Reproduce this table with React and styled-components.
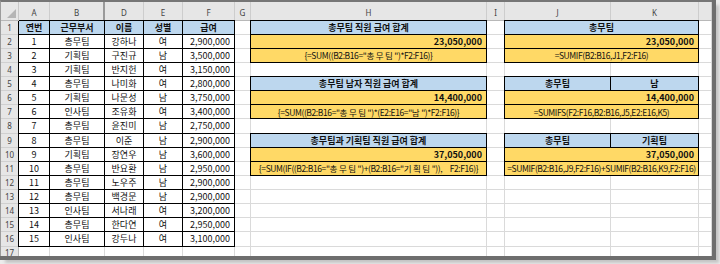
import React from "react";
import styled, { createGlobalStyle, css } from "styled-components";

const Global = createGlobalStyle`
  html, body { margin: 0; padding: 0; background: #ececec; }
  body { width: 720px; height: 264px; overflow: hidden; }
`;

const Frame = styled.div`
  width: 711px;
  height: 254px;
  background: #fff;
  border-top: 2px solid #767676;
  border-left: 1px solid #9c9c9c;
  box-shadow: 2px 2px 0 2px #6e6e6e, 6px 6px 3px 1px #c4c4c4;
  overflow: hidden;
`;

const Sheet = styled.div`
  display: grid;
  grid-template-columns: 18px 31px 55px 39px 39px 52px 16px 236px 18px 106px 88px 13px;
  grid-template-rows: 18.5px repeat(16, 14.125px) 12px;
  font-family: "Noto Sans CJK KR", "Noto Sans", sans-serif;
  font-size: 9px;
  color: #111;
`;

const Corner = styled.div`
  background: #e6e6e6;
  border-right: 1px solid #c8c8c8;
  border-bottom: 1px solid #b8b8b8;
  position: relative;
  &::after {
    content: "";
    position: absolute;
    right: 2px;
    bottom: 2px;
    width: 0;
    height: 0;
    border-left: 9px solid transparent;
    border-bottom: 9px solid #b5b5b5;
  }
`;

const ColHead = styled.div`
  background: #e6e6e6;
  border-right: ${(p) => (p.$double ? "2px double #9a9a9a" : "1px solid #cdcdcd")};
  border-bottom: 1px solid #b8b8b8;
  display: flex;
  align-items: center;
  justify-content: center;
  font-family: "Noto Sans", sans-serif;
  font-size: 8px;
  color: #444;
  padding-top: 3px;
`;

const RowHead = styled.div`
  background: #e6e6e6;
  border-right: 1px solid #b8b8b8;
  border-bottom: 1px solid #d0d0d0;
  display: flex;
  align-items: center;
  justify-content: center;
  font-family: "Noto Sans", sans-serif;
  font-size: 8px;
  color: #444;
  overflow: hidden;
`;

const fills = { blue: "#bdd7ee", yellow: "#ffd966" };

const Cell = styled.div`
  grid-column: span ${(p) => p.$span || 1};
  background: ${(p) => (p.$fill ? fills[p.$fill] : "#fff")};
  border-right: 1px solid #dadada;
  border-bottom: 1px solid #dadada;
  display: flex;
  align-items: center;
  justify-content: ${(p) => (p.$align === "right" ? "flex-end" : "center")};
  padding: 0 ${(p) => (p.$align === "right" ? "4px" : "1px")} 0 1px;
  font-weight: ${(p) => (p.$bold ? 700 : 400)};
  white-space: nowrap;
  overflow: hidden;
  ${(p) =>
    p.$formula &&
    css`
      font-size: 8.5px;
      letter-spacing: -0.4px;
      word-spacing: 1px;
    `}
  ${(p) =>
    p.$boxed &&
    css`
      border-right-color: #000;
      border-bottom-color: #000;
      box-shadow: -1px 0 0 #000, 0 -1px 0 #000, -1px -1px 0 #000;
    `}
`;

const Quoted = styled.span`
  letter-spacing: 1.5px;
`;

const people = [
  [1, "총무팀", "강하나", "여", "2,900,000"],
  [2, "기획팀", "구진규", "남", "3,500,000"],
  [3, "기획팀", "반지헌", "여", "3,150,000"],
  [4, "총무팀", "나미화", "여", "2,800,000"],
  [5, "기획팀", "나문성", "남", "3,750,000"],
  [6, "인사팀", "조유화", "여", "3,400,000"],
  [7, "총무팀", "윤진미", "남", "2,750,000"],
  [8, "총무팀", "이준", "남", "2,900,000"],
  [9, "기획팀", "장연우", "남", "3,600,000"],
  [10, "총무팀", "반요환", "남", "2,950,000"],
  [11, "총무팀", "노우주", "남", "2,900,000"],
  [12, "총무팀", "백경문", "남", "2,900,000"],
  [13, "인사팀", "서나래", "여", "3,200,000"],
  [14, "총무팀", "한다연", "여", "2,950,000"],
  [15, "인사팀", "강두나", "여", "3,100,000"],
];

const title = (t) => ({ text: t, fill: "blue", bold: true, boxed: true });
const value = (t) => ({ text: t, fill: "yellow", bold: true, align: "right", boxed: true });
const formula = (t) => ({ text: t, fill: "yellow", boxed: true, formula: true });
const empty = {};

const Q = ({ children }) => <Quoted>{children}</Quoted>;

// right side: H, I, J, K, L
const rightRows = {
  1: [title("총무팀 직원 급여 합계"), empty, { ...title("총무팀"), span: 2 }, empty],
  2: [value("23,050,000"), empty, { ...value("23,050,000"), span: 2 }, empty],
  3: [
    formula(<>{'{=SUM((B2:B16="'}<Q>총무팀</Q>{'")*F2:F16)}'}</>),
    empty,
    { ...formula("=SUMIF(B2:B16,J1,F2:F16)"), span: 2 },
    empty,
  ],
  5: [title("총무팀 남자 직원 급여 합계"), empty, title("총무팀"), title("남"), empty],
  6: [value("14,400,000"), empty, { ...value("14,400,000"), span: 2 }, empty],
  7: [
    formula(<>{'{=SUM((B2:B16="'}<Q>총무팀</Q>{'")*(E2:E16="'}<Q>남</Q>{'")*F2:F16)}'}</>),
    empty,
    { ...formula("=SUMIFS(F2:F16,B2:B16,J5,E2:E16,K5)"), span: 2 },
    empty,
  ],
  9: [title("총무팀과 기획팀 직원 급여 합계"), empty, title("총무팀"), title("기획팀"), empty],
  10: [value("37,050,000"), empty, { ...value("37,050,000"), span: 2 }, empty],
  11: [
    formula(
      <>
        {'{=SUM(IF((B2:B16="'}
        <Q>총무팀</Q>
        {'")+(B2:B16="'}
        <Q>기획팀</Q>
        {'")),\u00a0\u00a0\u00a0F2:F16)}'}
      </>
    ),
    empty,
    { ...formula("=SUMIF(B2:B16,J9,F2:F16)+SUMIF(B2:B16,K9,F2:F16)"), span: 2 },
    empty,
  ],
};

const blankRight = [empty, empty, empty, empty, empty];

function leftCells(r) {
  if (r === 1) {
    return ["연번", "근무부서", "이름", "성별", "급여"].map((t) => ({ text: t, fill: "blue", bold: true, boxed: true }));
  }
  if (r >= 2 && r <= 16) {
    const p = people[r - 2];
    return [
      { text: p[0], boxed: true },
      { text: p[1], boxed: true },
      { text: p[2], boxed: true },
      { text: p[3], boxed: true },
      { text: p[4], boxed: true, align: "right" },
    ];
  }
  return [empty, empty, empty, empty, empty];
}

const columns = ["A", "B", "D", "E", "F", "G", "H", "I", "J", "K", ""];

export default function App() {
  const rows = [];
  for (let r = 1; r <= 17; r++) {
    const cells = [...leftCells(r), empty, ...(rightRows[r] || blankRight)];
    rows.push(
      <React.Fragment key={r}>
        <RowHead>{r}</RowHead>
        {cells.map((c, i) => (
          <Cell
            key={i}
            $fill={c.fill}
            $bold={c.bold}
            $align={c.align}
            $boxed={c.boxed}
            $span={c.span}
            $formula={c.formula}
          >
            {c.text}
          </Cell>
        ))}
      </React.Fragment>
    );
  }
  return (
    <>
      <Global />
      <Frame>
        <Sheet>
          <Corner />
          {columns.map((c, i) => (
            <ColHead key={i} $double={c === "B"}>
              {c}
            </ColHead>
          ))}
          {rows}
        </Sheet>
      </Frame>
    </>
  );
}
